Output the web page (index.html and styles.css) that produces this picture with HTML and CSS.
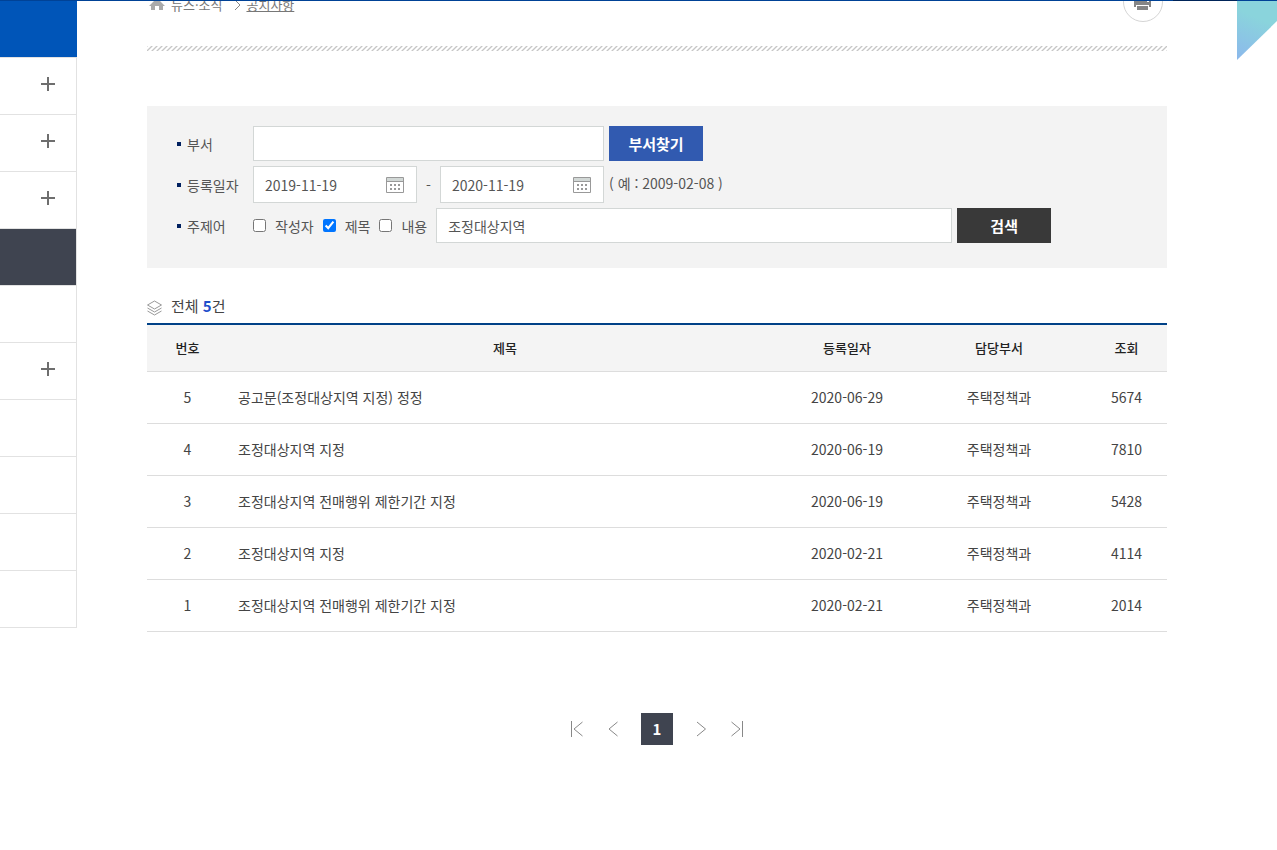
FILE: index.html
```html
<!DOCTYPE html>
<html lang="ko">
<head>
<meta charset="utf-8">
<title>공지사항</title>
<link rel="stylesheet" href="styles.css">
</head>
<body>
<div class="topline"><span class="topline-dark"></span></div>
<div class="ribbon"><svg width="40" height="60" viewBox="0 0 40 60"><defs><linearGradient id="rb" x1="0.3" y1="0" x2="0" y2="1"><stop offset="0.2" stop-color="#8ad4dc"/><stop offset="1" stop-color="#8cb8ec"/></linearGradient></defs><path d="M0 0H40V20L0 59Z" fill="url(#rb)"/></svg></div>
<div class="page">
  <nav class="side" aria-label="메뉴">
    <div class="side-title"></div>
    <ul class="side-list">
      <li><button class="side-btn plus" aria-label="펼치기"></button></li>
      <li><button class="side-btn plus" aria-label="펼치기"></button></li>
      <li><button class="side-btn plus" aria-label="펼치기"></button></li>
      <li class="on"></li>
      <li></li>
      <li><button class="side-btn plus" aria-label="펼치기"></button></li>
      <li></li>
      <li></li>
      <li></li>
      <li></li>
    </ul>
  </nav>
  <main class="main">
    <div class="location">
      <div class="crumbs">
        <svg class="home" width="16" height="14" viewBox="0 0 16 14"><path d="M8 0L0 8H2V12H6V8H10V12H14V8H16Z" fill="#aaa"/></svg>
        <a href="#" class="crumb">뉴스·소식</a>
        <svg width="7" height="12" viewBox="0 0 7 12"><path d="M1 1L6 6L1 11" fill="none" stroke="#888"/></svg>
        <a href="#" class="crumb here">공지사항</a>
      </div>
      <button class="print" aria-label="인쇄"><svg width="18" height="18" viewBox="0 0 18 18"><path d="M4 1H14V4H4ZM0 5H17V14H0Z" fill="#858585"/><path d="M2 12H15V18H2Z" fill="#fff"/><path d="M3 13H14V17H3Z" fill="#858585"/><path d="M13 7H15V9H13Z" fill="#fff"/></svg></button>
    </div>
    <svg class="hatch" width="100%" height="5"><defs><pattern id="ht" width="5" height="5" patternUnits="userSpaceOnUse"><path d="M0 5L5 0M-1 1L1 -1M4 6L6 4" stroke="#c6c6c6" stroke-width="1.300"/></pattern></defs><rect width="100%" height="5" fill="url(#ht)"/></svg>

    <form class="search">
      <div class="row">
        <label class="name" for="dept">부서</label>
        <input class="box dept" id="dept" type="text">
        <button class="btn blue" type="button">부서찾기</button>
      </div>
      <div class="row dates">
        <label class="name" for="from">등록일자</label>
        <span class="date"><input class="box" id="from" type="text" value="2019-11-19"><svg class="cal" width="18" height="16" viewBox="0 0 18 16"><path d="M.5.5H17.5V15.5H.5Z" fill="#fff" stroke="#999"/><path d="M1 1H17V4H1Z" fill="#d2d8d6"/><path d="M1 4.500H17" stroke="#999"/><path d="M4 8H14M4 12H14" stroke="#999" stroke-width="2" stroke-dasharray="2"/></svg></span>
        <span class="dash">-</span>
        <span class="date"><input class="box" id="to" type="text" value="2020-11-19" aria-label="종료일"><svg class="cal" width="18" height="16" viewBox="0 0 18 16"><path d="M.5.5H17.5V15.5H.5Z" fill="#fff" stroke="#999"/><path d="M1 1H17V4H1Z" fill="#d2d8d6"/><path d="M1 4.500H17" stroke="#999"/><path d="M4 8H14M4 12H14" stroke="#999" stroke-width="2" stroke-dasharray="2"/></svg></span>
        <span class="example">( 예 : 2009-02-08 )</span>
      </div>
      <div class="row">
        <label class="name" for="word">주제어</label>
        <div class="checks">
          <label class="check"><input type="checkbox">작성자</label>
          <label class="check"><input type="checkbox" checked>제목</label>
          <label class="check"><input type="checkbox">내용</label>
        </div>
        <input class="box word" id="word" type="text" value="조정대상지역">
        <button class="btn dark" type="submit">검색</button>
      </div>
    </form>

    <p class="total"><svg width="16" height="16" viewBox="0 0 16 16" fill="none" stroke="#999"><path d="M7.500 1L14.500 5L7.500 9L.5 5Z"/><path d="M.5 8L7.500 12L14.500 8M.5 11L7.500 15L14.500 11"/></svg><span>전체 <strong>5</strong>건</span></p>
    <table class="list">
      <colgroup><col class="c-no"><col><col class="c-date"><col class="c-dept"><col class="c-hit"></colgroup>
      <thead><tr><th>번호</th><th>제목</th><th>등록일자</th><th>담당부서</th><th>조회</th></tr></thead>
      <tbody>
        <tr><td>5</td><td class="subject"><a href="#">공고문(조정대상지역 지정) 정정</a></td><td>2020-06-29</td><td>주택정책과</td><td>5674</td></tr>
        <tr><td>4</td><td class="subject"><a href="#">조정대상지역 지정</a></td><td>2020-06-19</td><td>주택정책과</td><td>7810</td></tr>
        <tr><td>3</td><td class="subject"><a href="#">조정대상지역 전매행위 제한기간 지정</a></td><td>2020-06-19</td><td>주택정책과</td><td>5428</td></tr>
        <tr><td>2</td><td class="subject"><a href="#">조정대상지역 지정</a></td><td>2020-02-21</td><td>주택정책과</td><td>4114</td></tr>
        <tr><td>1</td><td class="subject"><a href="#">조정대상지역 전매행위 제한기간 지정</a></td><td>2020-02-21</td><td>주택정책과</td><td>2014</td></tr>
      </tbody>
    </table>

    <div class="paging">
      <a href="#" aria-label="처음"><svg width="12" height="16" viewBox="0 0 12 16"><path d="M.5 0V16M11.500 1L3 8L11.500 15"/></svg></a>
      <a href="#" aria-label="이전"><svg width="12" height="16" viewBox="0 0 12 16"><path d="M10.500 1L2 8L10.500 15"/></svg></a>
      <a href="#" class="now">1</a>
      <a href="#" aria-label="다음"><svg width="12" height="16" viewBox="0 0 12 16"><path d="M2 1L10.500 8L2 15"/></svg></a>
      <a href="#" aria-label="마지막"><svg width="12" height="16" viewBox="0 0 12 16"><path d="M11.500 0V16M.5 1L9 8L.5 15"/></svg></a>
    </div>
  </main>
</div>
</body>
</html>
```
FILE: styles.css
```css
* { box-sizing: border-box; }
body {
  margin: 0;
  background: #fff;
  color: #444;
  font: 14px/20px "Noto Sans CJK KR", sans-serif;
}
a { color: inherit; text-decoration: none; }
button { border: 0; padding: 0; font: inherit; cursor: pointer; }
svg { display: block; flex: none; }

.topline { height: 1px; display: flex; justify-content: flex-end; padding-right: 40px; background: #004296; }
.topline-dark { width: 64px; background: #002458; }
.ribbon { position: absolute; top: 1px; right: 0; }

.page { display: flex; align-items: flex-start; }
.side { width: 77px; flex: none; }
.side-title { height: 56px; background: #0055b8; }
.side-list { margin: 0; padding: 0; list-style: none; border: solid #e2e2e2; border-width: 1px 1px 0 0; }
.side-list li {
  display: flex;
  align-items: center;
  justify-content: flex-end;
  height: 57px;
  padding: 0 21px 4px 0;
  border-bottom: 1px solid #e2e2e2;
}
.side-list li.on { background: #3f4450; }
.side-btn {
  width: 14px;
  height: 14px;
  background:
    linear-gradient(#6e6e6e, #6e6e6e) center / 14px 2px no-repeat,
    linear-gradient(#6e6e6e, #6e6e6e) center / 2px 14px no-repeat;
}

.main { flex: 1; min-width: 0; padding: 0 110px 0 70px; }
.location { display: flex; justify-content: space-between; align-items: flex-end; height: 45px; padding: 0 4px 24px 2px; overflow: hidden; }
.crumbs { display: flex; align-items: center; height: 34px; font-size: 13px; color: #777; }
.crumb { margin: 0 12px 0 6px; }
.here { margin: 0 0 0 5px; text-decoration: underline; }
.print {
  display: flex;
  align-items: center;
  justify-content: center;
  width: 40px;
  height: 40px;
  border: 1px solid #d5d5d5;
  border-radius: 50%;
  background: #fff;
}

.search {
  display: flex;
  flex-direction: column;
  gap: 5px;
  margin-top: 55px;
  padding: 20px 30px 25px;
  background: #f3f3f3;
  color: #555;
}
.row { display: flex; align-items: center; gap: 5px; }
.name { display: flex; align-items: center; width: 71px; flex: none; }
.name::before { content: ""; width: 4px; height: 4px; margin-right: 6px; background: #00205f; }
.box {
  height: 35px;
  padding: 0 11px;
  border: 1px solid #d3d7d6;
  border-radius: 0;
  background: #fff;
  color: #555;
  font: inherit;
}
.dept { width: 351px; }
.btn { width: 94px; height: 35px; flex: none; color: #fff; font-size: 15px; font-weight: 700; }
.blue { background: #315ab0; }
.dark { background: #393939; }
.date { position: relative; }
.date .box { display: block; width: 164px; height: 37px; }
.cal { position: absolute; right: 13px; top: 11px; }
.dash { width: 13px; text-align: center; }
.example { padding-bottom: 4px; }
.checks { display: flex; gap: 9px; margin-right: 4px; }
.check { display: flex; align-items: center; white-space: nowrap; }
.check input { width: 13px; height: 13px; margin: 0 9px 0 0; }
.word { flex: 0 1 516px; min-width: 0; }

.total { display: flex; align-items: center; gap: 8px; height: 35px; margin: 20px 0 0; font-size: 15px; }
.total svg { margin-top: 4px; }
.total strong { color: #1f4fcb; font-weight: 700; }
.list { width: 100%; border-collapse: collapse; table-layout: fixed; border-top: 2px solid #004187; text-align: center; }
.c-no { width: 81px; }
.c-date { width: 130px; }
.c-dept { width: 174px; }
.c-hit { width: 81px; }
.list th { height: 47px; padding: 0; background: #f4f4f4; color: #222; font-size: 13px; font-weight: 500; }
.list td { height: 52px; padding: 0; }
.list tr { border-bottom: 1px solid #ddd; }
.list .subject { padding-left: 10px; text-align: left; }

.paging { display: flex; justify-content: center; align-items: center; gap: 4px; margin-top: 81px; }
.paging a { display: flex; align-items: center; justify-content: center; width: 32px; height: 32px; }
.paging svg { fill: none; stroke: #888; }
.paging .now { margin: 0 8px; background: #3f4450; color: #fff; font-size: 15px; font-weight: 700; }
```
